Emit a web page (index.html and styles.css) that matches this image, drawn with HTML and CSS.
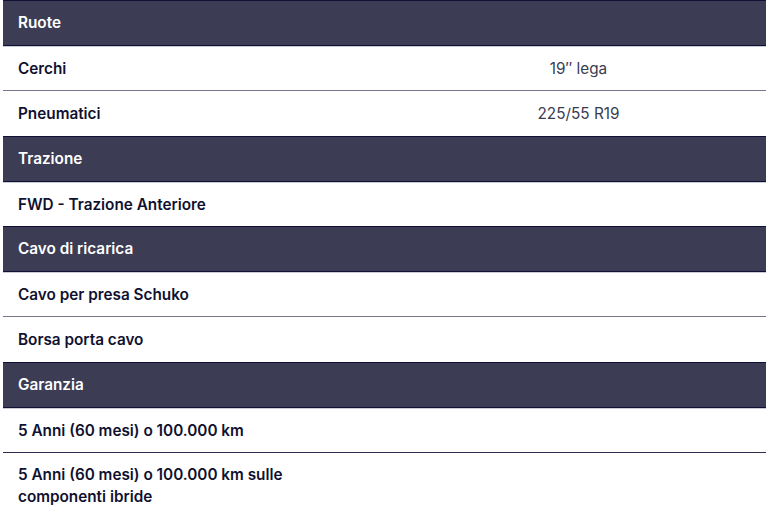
FILE: index.html
```html
<!DOCTYPE html>
<html lang="it">
<head>
<meta charset="utf-8">
<link rel="stylesheet" href="styles.css">
</head>
<body>
<table class="specs">
  <colgroup><col class="col-label"><col class="col-value"></colgroup>
  <tbody>
    <tr class="group top"><th colspan="2">Ruote</th></tr>
    <tr class="item first"><td class="label">Cerchi</td><td class="value">19″ lega</td></tr>
    <tr class="item last"><td class="label">Pneumatici</td><td class="value">225/55 R19</td></tr>
    <tr class="group"><th colspan="2">Trazione</th></tr>
    <tr class="item first last"><td class="label">FWD - Trazione Anteriore</td><td class="value"></td></tr>
    <tr class="group"><th colspan="2">Cavo di ricarica</th></tr>
    <tr class="item first"><td class="label">Cavo per presa Schuko</td><td class="value"></td></tr>
    <tr class="item last"><td class="label">Borsa porta cavo</td><td class="value"></td></tr>
    <tr class="group"><th colspan="2">Garanzia</th></tr>
    <tr class="item first dark"><td class="label">5 Anni (60 mesi) o 100.000 km</td><td class="value"></td></tr>
    <tr class="item final"><td class="label">5 Anni (60 mesi) o 100.000 km sulle componenti ibride</td><td class="value"></td></tr>
  </tbody>
</table>
</body>
</html>
```
FILE: styles.css
```css
html, body {
  margin: 0;
  padding: 0;
  background: #ffffff;
}
body {
  padding: 0 2px 0 3px;
  font-family: Inter, "Noto Sans", sans-serif;
}
.specs {
  width: 763px;
  border-collapse: separate;
  border-spacing: 0;
  table-layout: fixed;
}
.col-label {
  width: 388px;
}
.specs th,
.specs td {
  padding: 0 15px;
  font-size: 15.3px;
  line-height: 22px;
  text-align: left;
  box-sizing: border-box;
}
.group th {
  height: 46px;
  background: #3c3d55;
  color: #ffffff;
  font-weight: 600;
  border-top: 1px solid #0f1034;
  border-bottom: 1px solid #0f1034;
}
.group.top th {
  height: 46px;
}
.item td {
  height: 45px;
  border-bottom: 1px solid #75768a;
}
.item.first td {
  border-top: 1px solid #c9cad4;
}
.item.last td {
  border-bottom: none;
}
.item.first.last td {
  height: 44px;
}
.item.dark td {
  border-bottom: 1px solid #2c2d4f;
}
.item.final td {
  border-bottom: none;
  border-top: none;
  padding-top: 11px;
  vertical-align: top;
  height: 66px;
}
.label {
  padding-right: 35px !important;
  color: #101130;
  font-weight: 600;
}
.value {
  color: #3a3b50;
  font-weight: 400;
  text-align: center !important;
}
```
